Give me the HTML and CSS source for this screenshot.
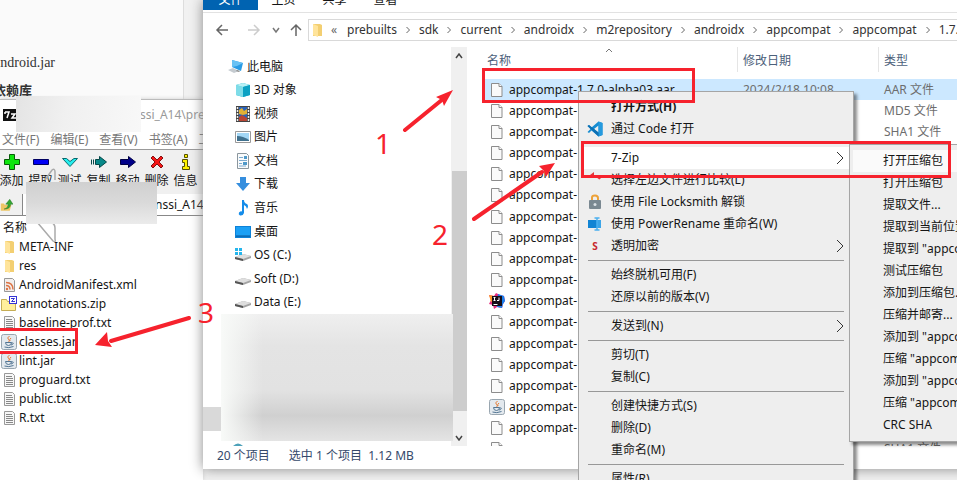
FILE: index.html
```html
<!DOCTYPE html>
<html lang="zh-CN">
<head>
<meta charset="utf-8">
<title>appcompat</title>
<link rel="stylesheet" href="styles.css">
</head>
<body>
<svg class="defs" aria-hidden="true">
  <defs>
    <symbol id="file" viewBox="0 0 16 16"><path d="M2.500 1.500h7.500l3 3v10h-10.500z" fill="#fafafa" stroke="#8c8c8c"/><path d="M10 1.500v3h3" fill="#fff" stroke="#8c8c8c"/></symbol>
    <symbol id="folder" viewBox="0 0 16 16"><path d="M4 2h7l2 1v11H4z" fill="#f3cf72"/><path d="M4 2l5 2v11l-5-2z" fill="#ffe49b"/></symbol>
    <symbol id="text" viewBox="0 0 16 16"><path d="M3.500 1.500h8l2 2v11h-10z" fill="#f7f7f7" stroke="#999"/><path d="M5 4.500h6M5 6.500h7M5 8.500h7M5 10.500h7M5 12.500h7" stroke="#888"/></symbol>
    <symbol id="xml" viewBox="0 0 16 16"><path d="M3.500 1.500h8l2 2v11h-10z" fill="#f2efed" stroke="#999"/><path d="M5 5.500q7 0 7 7M5 8.500q4 0 4 4" fill="none" stroke="#dd7445" stroke-width="1.500"/><circle cx="6" cy="12" r="1.200" fill="#dd7445"/></symbol>
    <symbol id="zip" viewBox="0 0 16 16"><path d="M0.500 3.500h5l1 2h8v9h-14z" fill="#ffef9c" stroke="#c5ad55"/><rect x="8.500" y="0.500" width="7" height="7" fill="#fff" stroke="#3535d5"/><path d="M10 2.500h3.500l-3 3H14" fill="none" stroke="#3535d5"/></symbol>
    <symbol id="jar" viewBox="0 0 16 16"><rect x="0.500" y="0.500" width="15" height="15" rx="2" fill="#e3e9ee" stroke="#99a6b0"/><path d="M8.500 2q-3 2-1 3.500T7.500 8M10 4q-2 1.500-1 3" fill="none" stroke="#e57a31"/><path d="M4.500 8.500h6q0 3-3 3t-3-3M10.500 9q3-.5 1 1.500l-1.500.5M3.500 13q4 1.500 9-.5" fill="none" stroke="#527593"/></symbol>
    <symbol id="idea" viewBox="0 0 16 16"><path d="M0 2l5 1 2-3 4 2 4 1 1 5-2 3-1 4-5-1-3 2-1-4-4-1 2-4z" fill="#e72d80"/><path d="M0 2l5 1 1 4-4 2z" fill="#ff9a27"/><path d="M9 1l6 2 1 5-2 3-1 4-5-1z" fill="#187fed"/><rect x="3" y="3" width="10" height="10" fill="#170d18"/><path d="M4.500 4.500h2M5.500 4.500v3M4.500 7.500h2M10 4.500v3H8M4.500 11.500h4" stroke="#fff" fill="none"/></symbol>
    <symbol id="pc" viewBox="0 0 16 16"><path d="M4 1l11 3-2 8-9-4z" fill="#299be5"/><path d="M4 1l11 3-6 3-5 1z" fill="#68c1f4"/><path d="M0 11l5-2 6 3-5 2z" fill="#c5cbd0"/><path d="M9 11l3 1-1 1-3-1z" fill="#888"/></symbol>
    <symbol id="cube" viewBox="0 0 16 16"><path d="M1 3l7-2 7 2v10l-7 2-7-2z" fill="#19b5d1"/><path d="M1 3l7 2v10l-7-2z" fill="#7edce8"/><path d="M1 3l7-2 7 2-7 2z" fill="#b8f0f4"/><path d="M8 5l7-2v10l-7 2z" fill="#0ba1c3"/></symbol>
    <symbol id="video" viewBox="0 0 16 16"><path d="M1 0h14v16H1z" fill="#444"/><path d="M4 1h8v14H4z" fill="#2861b8"/><path d="M4 4l3-2 2 3 3-2v5l-4 1-4-1z" fill="#e1b135"/><path d="M4 11l3-2 5 3v3H4z" fill="#b84533"/><path d="M2.500 1v14M13.500 1v14" stroke="#eee" stroke-width="1.500" stroke-dasharray="2 1"/></symbol>
    <symbol id="image" viewBox="0 0 16 16"><path d="M.5 2.500h15v11H.5z" fill="#fff" stroke="#999"/><path d="M2 4h12v8H2z" fill="#a3d7f6"/><path d="M2 7q6 0 12 4v1H2z" fill="#40718e"/></symbol>
    <symbol id="doc" viewBox="0 0 16 16"><path d="M2.500.5h9l2 2v13h-11z" fill="#f9fbfc" stroke="#8b969d"/><path d="M4 4.500h4M4 7.500h8M4 10.500h3M4 13h7" stroke="#7eaace"/><path d="M9 3h3v3H9zM8 9h4v3H8z" fill="#4f99c9"/></symbol>
    <symbol id="down" viewBox="0 0 16 16"><path d="M5 1h6v6h4l-7 8-7-8h4z" fill="#358ede"/></symbol>
    <symbol id="note" viewBox="0 0 16 16"><path d="M7 0h2q0 3 3 4 2 2 0 5-.5-3-3-4v8q-1 3-4 2.500-2-1-1-3 2-2 3-1z" fill="#158ce9"/></symbol>
    <symbol id="desk" viewBox="0 0 16 16"><path d="M0 2h16v12H0z" fill="#0d82d8"/><path d="M1 3h14v9H1z" fill="#1ba0f5"/><path d="M1 12h14" stroke="#0a5999"/></symbol>
    <symbol id="disk" viewBox="0 0 16 16"><path d="M0 10l8-3 8 2v2l-8 3-8-2z" fill="#a4a4a4"/><path d="M0 10l8-3 8 2-8 3z" fill="#dedede"/><path d="M0 10l8 2v2l-8-2z" fill="#555"/></symbol>
    <symbol id="osdisk" viewBox="0 0 16 16"><use href="#disk" width="16" height="16"/><path d="M0 1h3v3H0zM4 1h3v3H4zM0 5h3v3H0zM4 5h3v3H4z" fill="#24b5ec"/></symbol>
    <symbol id="code" viewBox="0 0 16 16"><path d="M11.500.5L15.500 2v12l-4 1.500L4.500 9.500 2 12 .5 11l3-3-3-3L2 4l2.500 2.500zM11.500 4.500L7 8l4.500 3.500z" fill="#168cd1" fill-rule="evenodd"/><path d="M11.500.5L15.500 2v12l-4 1.500z" fill="#259ade"/><path d="M2 4L.5 5l11 10.500v-4z" fill="#0d70b4"/></symbol>
    <symbol id="lock" viewBox="0 0 16 16"><path d="M5 6V3.500q0-2 3-2t3 2.500v3" stroke="#eda239" stroke-width="2" fill="none"/><rect x="2" y="6" width="12" height="9" rx="1" fill="#7a8891"/><circle cx="8" cy="10.500" r="1.500" fill="#d9dfe4"/></symbol>
    <symbol id="rename" viewBox="0 0 16 16"><path d="M1 4h9v8H1z" fill="#1184d4"/><path d="M10 4h4v8h-4z" fill="#3ba5e8"/><path d="M7.500 2h5M10 2v12M7.500 14h5" stroke="#4bb0ef" stroke-width="1.500"/></symbol>
    <symbol id="chev" viewBox="0 0 8 16"><path d="M1 2l6 6-6 6" fill="none" stroke="#333"/></symbol>
    <symbol id="small" viewBox="0 0 6 8"><path d="M1.500 1l3 3-3 3" fill="none" stroke="#666"/></symbol>
  </defs>
</svg>

<main class="desktop">
  <article class="page">
    <p class="page-line">android.jar</p>
    <h2 class="page-title">依赖库</h2>
  </article>

  <section class="zip-window">
    <header class="zip-title"><svg class="logo" viewBox="0 0 14 12"><path d="M0 0h14v12H0z" fill="#111"/><path d="M2 3h4L4 9M8 5h4L9 9h4M2 3v2" stroke="#fff" fill="none" stroke-width="1.500"/></svg><span>ssi_A14\pre</span></header>
    <nav class="zip-menu"><a href="#">文件(F)</a><a href="#">编辑(E)</a><a href="#">查看(V)</a><a href="#">书签(A)</a><a href="#">工具(T)</a></nav>
    <div class="tools">
      <button><svg viewBox="0 0 16 16"><path d="M5.500.5h5v5h5v5h-5v5h-5v-5h-5v-5h5z" fill="#0ee50e" stroke="#075b07"/></svg>添加</button>
      <button><svg viewBox="0 0 16 16"><path d="M.5 5.500h15v5H.5z" fill="#0000f5" stroke="#000060"/></svg>提取</button>
      <button><svg viewBox="0 0 16 16"><path d="M.5 4.500h4L8 7.500l4-3h3.500L8 12.500z" fill="#24eeee" stroke="#08686b"/></svg>测试</button>
      <button><svg viewBox="0 0 16 16"><path d="M.5 5.500v5M2.500 5.500v5M4.500 5.500h4v-3L15.500 8l-7 5.500v-3h-4z" fill="#078989" stroke="#054848"/></svg>复制</button>
      <button><svg viewBox="0 0 16 16"><path d="M.5 5.500h8v-3L15.500 8l-7 5.500v-3h-8z" fill="#00008a" stroke="#000045"/></svg>移动</button>
      <button><svg viewBox="0 0 16 16"><path d="M2 4l2-2 4 4 4-4 2 2-4 4 4 4-2 2-4-4-4 4-2-2 4-4z" fill="#f51616" stroke="#831010"/></svg>删除</button>
      <button><svg viewBox="0 0 16 16"><path d="M6.500.5h3v3h-3zM4.500 5.500h5v7h2v3h-7v-3h2v-4h-2z" fill="#fff200" stroke="#555000"/></svg>信息</button>
    </div>
    <div class="zip-address"><svg class="up" viewBox="0 0 16 16"><path d="M1 6h4l1 2h8l-2 7H1z" fill="#ecc666"/><path d="M5 13q5-1 5-6H7l5-6 4 6h-3q0 6-8 6z" fill="#35a735" stroke="#196819" stroke-width=".5"/></svg><label class="zip-path"><input aria-label="路径" value="nssi_A14\"></label></div>
    <h3 class="zip-head">名称</h3>
    <ul class="zip-files">
      <li><svg><use href="#folder"/></svg>META-INF</li>
      <li><svg><use href="#folder"/></svg>res</li>
      <li><svg><use href="#xml"/></svg>AndroidManifest.xml</li>
      <li><svg><use href="#zip"/></svg>annotations.zip</li>
      <li><svg><use href="#text"/></svg>baseline-prof.txt</li>
      <li><svg><use href="#jar"/></svg>classes.jar</li>
      <li><svg><use href="#jar"/></svg>lint.jar</li>
      <li><svg><use href="#text"/></svg>proguard.txt</li>
      <li><svg><use href="#text"/></svg>public.txt</li>
      <li><svg><use href="#text"/></svg>R.txt</li>
    </ul>
    <svg class="ghost" viewBox="0 0 40 80"><path d="M16 12l7-10q3-2 3 2v8M8 54l16 19q3 2 2-2V60q0-4-4-6" fill="none" stroke="#aaa" stroke-width="1.500"/></svg>
    <div class="smudge smudge-title"></div>
    <div class="smudge smudge-path"></div>
  </section>

  <section class="explorer">
    <nav class="tabs"><a class="on" href="#">文件</a><a href="#">主页</a><a href="#">共享</a><a href="#">查看</a></nav>
    <div class="bar">
      <svg class="arrows" viewBox="0 0 96 20"><path d="M13 10H2M7 5l-5 5 5 5" stroke="#666" fill="none" stroke-width="1.500"/><path d="M33 10h11M39 5l5 5-5 5" stroke="#ccc" fill="none" stroke-width="1.500"/><path d="M58 8l3 4 3-4" stroke="#777" fill="none" stroke-width="1.500"/><path d="M81 16V5M76 10l5-5 5 5" stroke="#666" fill="none" stroke-width="1.500"/></svg>
      <div class="crumbs"><svg class="ic"><use href="#folder"/></svg><span class="back">«</span><a href="#">prebuilts</a><svg class="sep"><use href="#small"/></svg><a href="#">sdk</a><svg class="sep"><use href="#small"/></svg><a href="#">current</a><svg class="sep"><use href="#small"/></svg><a href="#">androidx</a><svg class="sep"><use href="#small"/></svg><a href="#">m2repository</a><svg class="sep"><use href="#small"/></svg><a href="#">androidx</a><svg class="sep"><use href="#small"/></svg><a href="#">appcompat</a><svg class="sep"><use href="#small"/></svg><a href="#">appcompat</a><svg class="sep"><use href="#small"/></svg><a href="#">1.7.0-alpha03</a></div>
    </div>
    <div class="body">
      <aside class="side">
        <ul class="tree">
          <li class="root"><svg><use href="#pc"/></svg>此电脑</li>
          <li><svg><use href="#cube"/></svg>3D 对象</li>
          <li><svg><use href="#video"/></svg>视频</li>
          <li><svg><use href="#image"/></svg>图片</li>
          <li><svg><use href="#doc"/></svg>文档</li>
          <li><svg><use href="#down"/></svg>下载</li>
          <li><svg><use href="#note"/></svg>音乐</li>
          <li><svg><use href="#desk"/></svg>桌面</li>
          <li><svg><use href="#osdisk"/></svg>OS (C:)</li>
          <li><svg><use href="#disk"/></svg>Soft (D:)</li>
          <li><svg><use href="#disk"/></svg>Data (E:)</li>
        </ul>
        <div class="picked"></div>
        <svg class="peek" viewBox="0 0 12 3"><path d="M1 3q5-5 10 0z" fill="#4da1b9"/></svg>
      </aside>
      <div class="scroll"><svg viewBox="0 0 8 6"><path d="M1 5l3-4 3 4" /></svg><i class="thumb"></i><svg viewBox="0 0 8 6"><path d="M1 1l3 4 3-4"/></svg></div>
      <div class="smudge smudge-tree"></div>
      <div class="list">
        <svg class="sort" viewBox="0 0 8 5"><path d="M1 4l3-3 3 3" fill="none" stroke="#777"/></svg>
        <table>
          <thead><tr><th>名称</th><th>修改日期</th><th>类型</th></tr></thead>
          <tbody>
            <tr class="sel"><td><svg><use href="#file"/></svg>appcompat-1.7.0-alpha03.aar</td><td>2024/2/18 10:08</td><td>AAR 文件</td></tr>
            <tr><td><svg><use href="#file"/></svg>appcompat-</td><td></td><td>MD5 文件</td></tr>
            <tr><td><svg><use href="#file"/></svg>appcompat-</td><td></td><td>SHA1 文件</td></tr>
            <tr><td><svg><use href="#file"/></svg>appcompat-</td><td></td><td></td></tr>
            <tr><td><svg><use href="#file"/></svg>appcompat-</td><td></td><td></td></tr>
            <tr><td><svg><use href="#file"/></svg>appcompat-</td><td></td><td></td></tr>
            <tr><td><svg><use href="#file"/></svg>appcompat-</td><td></td><td></td></tr>
            <tr><td><svg><use href="#file"/></svg>appcompat-</td><td></td><td></td></tr>
            <tr><td><svg><use href="#file"/></svg>appcompat-</td><td></td><td></td></tr>
            <tr><td><svg><use href="#file"/></svg>appcompat-</td><td></td><td></td></tr>
            <tr><td><svg><use href="#idea"/></svg>appcompat-</td><td></td><td></td></tr>
            <tr><td><svg><use href="#file"/></svg>appcompat-</td><td></td><td></td></tr>
            <tr><td><svg><use href="#file"/></svg>appcompat-</td><td></td><td></td></tr>
            <tr><td><svg><use href="#file"/></svg>appcompat-</td><td></td><td></td></tr>
            <tr><td><svg><use href="#file"/></svg>appcompat-</td><td></td><td></td></tr>
            <tr><td><svg><use href="#jar"/></svg>appcompat-</td><td></td><td></td></tr>
            <tr><td><svg><use href="#file"/></svg>appcompat-</td><td></td><td></td></tr>
            <tr><td><svg><use href="#file"/></svg></td><td></td><td>SHA1 文件</td></tr>
          </tbody>
        </table>
      </div>
    </div>
    <footer class="status"><span>20 个项目</span><span>选中 1 个项目&nbsp; 1.12 MB</span></footer>
  </section>

  <menu class="menu">
    <li class="bold">打开方式(H)</li>
    <li><svg class="ic"><use href="#code"/></svg>通过 Code 打开</li>
    <li class="zip">7-Zip<svg class="more"><use href="#chev"/></svg></li>
    <li><svg class="ic" viewBox="0 0 16 16"><path d="M2 5l4-3v2q5 0 7 3" stroke="#e2353a" fill="none" stroke-width="2"/></svg>选择左边文件进行比较(L)</li>
    <li><svg class="ic"><use href="#lock"/></svg>使用 File Locksmith 解锁</li>
    <li><svg class="ic"><use href="#rename"/></svg>使用 PowerRename 重命名(W)</li>
    <li><span class="ic badge">S</span>透明加密<svg class="more"><use href="#chev"/></svg></li>
    <li class="rule"></li>
    <li>始终脱机可用(F)</li>
    <li>还原以前的版本(V)</li>
    <li class="rule"></li>
    <li>发送到(N)<svg class="more"><use href="#chev"/></svg></li>
    <li class="rule"></li>
    <li>剪切(T)</li>
    <li>复制(C)</li>
    <li class="rule"></li>
    <li>创建快捷方式(S)</li>
    <li>删除(D)</li>
    <li>重命名(M)</li>
    <li class="rule"></li>
    <li>属性(R)</li>
  </menu>

  <menu class="submenu">
    <li class="hot">打开压缩包</li>
    <li>打开压缩包</li>
    <li>提取文件...</li>
    <li>提取到当前位置</li>
    <li>提取到 "appcompat-1.7.0-alpha03\"</li>
    <li>测试压缩包</li>
    <li>添加到压缩包...</li>
    <li>压缩并邮寄...</li>
    <li>添加到 "appcompat-1.7.0-alpha03.7z"</li>
    <li>压缩 "appcompat-1.7.0-alpha03.7z" 并邮寄</li>
    <li>添加到 "appcompat-1.7.0-alpha03.zip"</li>
    <li>压缩 "appcompat-1.7.0-alpha03.zip" 并邮寄</li>
    <li>CRC SHA</li>
  </menu>

  <svg class="marks" viewBox="0 0 957 480">
    <g fill="none" stroke="#f6222d" stroke-width="3"><path d="M483.500 69.500h210v32h-210zM582.500 142.500h367v34h-367zM-2 329.500h78.500v23H-2z"/></g>
    <g stroke="#f6222d" stroke-width="4" stroke-linecap="round"><path d="M405 130l38-31M474 219l68-47M189 318l-78 23"/></g>
    <g fill="#f6222d"><path d="M453 90l-9 16-2-6-6-3zM555 163l-9 14-2-6-5-5zM95 345l12-13 1 9 4 6z"/></g>
    <g class="digits"><text x="375" y="154">1</text><text x="432" y="245">2</text><text x="198" y="323">3</text></g>
  </svg>
</main>
</body>
</html>
```
FILE: styles.css
```css
* { box-sizing: border-box; }
html, body { height: 100%; }
body {
  margin: 0;
  overflow: hidden;
  font: 12px/20px "Noto Sans", "Noto Sans CJK SC", sans-serif;
  color: #151515;
}
ul, menu, h2, h3, p { margin: 0; padding: 0; list-style: none; font-weight: 400; }
a { color: inherit; text-decoration: none; }
.defs { position: absolute; width: 0; height: 0; }
.desktop { position: relative; height: 100%; overflow: hidden; background: #f1f1f1; }
svg { flex: none; width: 16px; height: 16px; }

.page { width: 184px; height: 100px; padding-top: 52px; background: #fafafa; border-right: 1px solid #ddd; }
.page-line { margin-left: -6px; font: 14px/22px "Liberation Serif", serif; color: #333; }
.page-title { margin: 6px 0 0 -7px; font-size: 13px; line-height: 20px; font-weight: 700; color: #333; }

.zip-window { position: absolute; left: 0; top: 99px; bottom: 0; width: 203px; background: #fff; border-top: 1px solid #bbb; box-shadow: 0 0 4px #ccc; }
.zip-title { display: flex; align-items: center; height: 30px; padding-left: 3px; color: #999; }
.zip-title .logo { width: 14px; height: 12px; margin-right: 123px; }
.zip-menu { display: flex; height: 19px; padding-left: 2px; gap: 11px; line-height: 19px; color: #777; white-space: nowrap; overflow: hidden; }
.zip-menu a { flex: none; }
.tools { display: flex; height: 45px; margin-left: -3px; padding-top: 4px; background: #f0f0f0; border-top: 1px solid #999; }
.tools button { flex: none; display: flex; flex-direction: column; align-items: center; width: 29px; padding: 0; border: 0; background: none; font: inherit; line-height: 20px; color: inherit; gap: 1px; white-space: nowrap; }
.zip-address { display: flex; align-items: center; height: 22px; background: #f0f0f0; border-bottom: 1px solid #888; }
.zip-address .up { width: 13px; }
.zip-path { flex: 1; height: 100%; margin-left: 9px; border-left: 1px solid #888; background: #fff; }
.zip-path input { width: 100%; height: 100%; padding: 0 0 0 132px; border: 0; font: inherit; color: inherit; background: none; }
.zip-head { padding: 2px 3px 0; font-size: 12px; line-height: 20px; }
.zip-files { display: grid; grid-auto-rows: 1fr; height: 189px; line-height: 18px; }
.zip-files li { display: flex; align-items: center; gap: 2px; padding-left: 1px; }
.ghost { position: absolute; left: 29px; top: 68px; width: 40px; height: 80px; }
.smudge { position: absolute; }
.smudge-title { left: 16px; top: -4px; width: 125px; height: 36px; background: linear-gradient(100deg, #e4e4e4, #f0f0f0 40%, #f8f8f8); }
.smudge-path { left: 26px; top: 82px; width: 131px; height: 42px; background: linear-gradient(#d0d0d0, #dadada 50%, #ebebeb); }

.explorer { position: absolute; left: 203px; right: -20px; top: 0; height: 469px; display: flex; flex-direction: column; background: #fff; box-shadow: 0 0 12px #888; }
.tabs { display: flex; height: 13px; border-bottom: 1px solid #e2e2e2; overflow: hidden; }
.tabs a { width: 51px; height: 20px; margin-top: -10px; text-align: center; }
.tabs .on { width: 55px; background: #0063b1; color: #fff; }
.bar { display: flex; align-items: center; height: 34px; }
.arrows { width: 96px; height: 20px; margin-left: 12px; }
.crumbs { flex: 1; display: flex; align-items: center; height: 22px; margin-left: -3px; border: 1px solid #d9d9d9; white-space: nowrap; overflow: hidden; color: #333; }
.crumbs > * { flex: none; }
.back { width: 22px; padding-left: 6px; color: #666; }
.sep { width: 6px; height: 8px; margin: 0 8px; }
.body { position: relative; flex: 1; display: flex; min-height: 0; }
.side { position: relative; width: 248px; padding-top: 8px; overflow: hidden; }
.tree { display: grid; grid-auto-rows: 1fr; height: 259px; }
.tree li { display: flex; align-items: center; gap: 3px; padding-left: 32px; }
.tree .root { padding-left: 25px; }
.picked { height: 24px; margin-top: 93px; background: #d9d9d9; }
.peek { position: absolute; left: 29px; bottom: 0; width: 12px; height: 3px; }
.smudge-tree { left: 18px; width: 232px; top: 267px; height: 127px; background: linear-gradient(90deg, #f8faf8, rgba(248,250,248,0) 18%), linear-gradient(#efefef, #e4e4e4 25%, #e2e2e2 60%, #d0d0d0 80%, #e4e4e4); }
.scroll { display: flex; flex-direction: column; align-items: center; width: 16px; padding: 6px 0 5px; background: #f0f0f0; }
.scroll svg { width: 8px; height: 6px; fill: none; stroke: #444; stroke-width: 1.5; }
.thumb { width: 15px; flex: 1; margin: 112px 0 24px; background: #cdcdcd; }
.list { position: relative; flex: 1; padding-left: 18px; overflow: hidden; }
.sort { position: absolute; left: 138px; top: 1px; width: 8px; height: 5px; }
table, thead { display: block; }
tr { display: grid; grid-template-columns: 252px 141px 1fr; align-items: center; }
th { height: 25px; padding-left: 5px; border-left: 1px solid #e5e5e5; text-align: left; font-weight: 400; color: #4c607a; line-height: 25px; }
th:first-child { padding-left: 2px; border-left: 0; }
thead tr { height: 32px; align-items: start; }
tbody { display: grid; grid-auto-rows: 1fr; height: 381px; }
td { display: flex; align-items: center; padding: 0 0 0 6px; color: #6d6d6d; white-space: nowrap; }
td:first-child { gap: 4px; padding-left: 4px; color: #151515; }
.sel { background: #cce8ff; }
.status { display: flex; height: 23px; color: #35496b; }
.status span { padding: 0 10px 0 14px; }
.status span + span { padding-left: 9px; }

.menu { position: absolute; left: 578px; top: 91px; width: 276px; padding: 4px 3px; background: #eee; border: 1px solid #a5a5a5; box-shadow: 3px 3px 3px rgba(0,0,0,.45); }
.menu li { display: flex; align-items: center; height: 22px; padding-left: 29px; }
.menu .ic { width: 16px; height: 16px; margin: 0 8px 0 -24px; }
.menu .more { width: 8px; height: 16px; margin: 0 6px 0 auto; }
.menu .bold { font-weight: 700; }
.menu .zip { margin-top: 7px; background: #fff; }
.menu .rule { height: 1px; margin: 3px 6px; background: #989898; }
.badge { text-align: center; font-size: 10px; line-height: 16px; font-weight: 700; color: #c7272c; }

.submenu { position: absolute; left: 849px; right: -30px; top: 144px; padding: 5px 3px; background: #eee; border: 1px solid #a5a5a5; box-shadow: 3px 3px 3px rgba(0,0,0,.45); }
.submenu li { height: 22px; padding-left: 30px; line-height: 22px; white-space: nowrap; overflow: hidden; }
.submenu .hot { background: #fafafa; }

.marks { position: absolute; left: 0; top: 0; width: 957px; height: 480px; pointer-events: none; }
.digits { font-size: 28px; fill: #f6222d; }
```
